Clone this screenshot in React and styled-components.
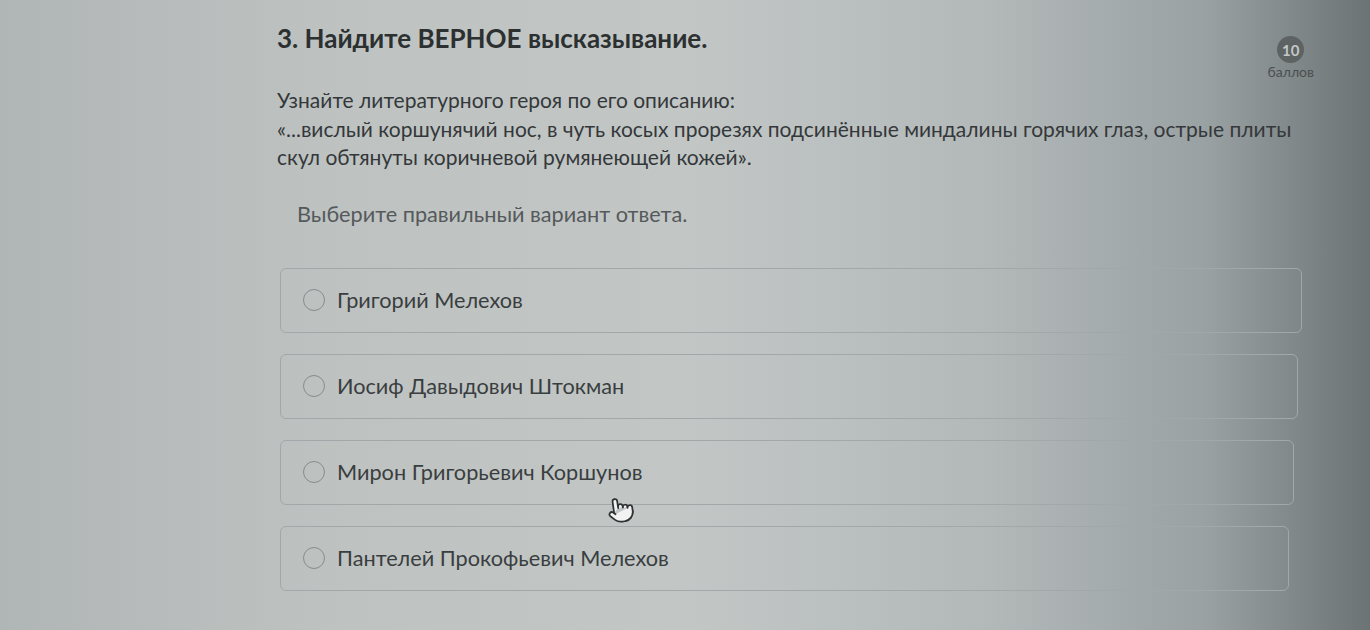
import React from "react";
import styled, { createGlobalStyle } from "styled-components";
import { Pointer } from "lucide-react";

const Global = createGlobalStyle`
  html, body { margin: 0; padding: 0; }
  body {
    width: 1370px;
    height: 630px;
    overflow: hidden;
    font-family: Lato, "Open Sans", "Noto Sans", sans-serif;
    background: linear-gradient(90deg, #b0b5b5 0%, #bec3c2 25%, #c2c7c6 50%, #b3b9b9 72%, #9aa1a3 88%, #6c7375 100%);
  }
`;

const Page = styled.div`
  position: relative;
  width: 1370px;
  height: 630px;
`;

const Question = styled.div`
  margin-left: 277px;
  width: 1035px;
  padding-top: 20px;
`;

const Header = styled.div`
  display: flex;
  justify-content: space-between;
  align-items: flex-start;
`;

const Title = styled.h2`
  margin: 0;
  font-size: 26px;
  line-height: 36px;
  font-weight: 700;
  color: #2c3031;
`;

const Score = styled.div`
  display: flex;
  flex-direction: column;
  align-items: center;
  margin-top: 16px;
  margin-right: -2px;
`;

const ScoreBadge = styled.div`
  width: 27px;
  height: 27px;
  border-radius: 50%;
  background: #5d6263;
  color: #c3c7c7;
  font-size: 15px;
  font-weight: 700;
  display: flex;
  align-items: center;
  justify-content: center;
`;

const ScoreLabel = styled.div`
  font-size: 14px;
  color: #4a4e4f;
`;

const Text = styled.div`
  margin-top: 6px;
  width: 1030px;
  font-size: 21px;
  line-height: 28.5px;
  color: #34383a;
`;

const Hint = styled.div`
  margin-top: 28px;
  margin-left: 20px;
  font-size: 21.7px;
  line-height: 28px;
  color: #55595b;
`;

const Options = styled.div`
  margin-top: 40px;
  margin-left: 3px;
  width: 1022px;
  display: flex;
  flex-direction: column;
  gap: 21px;
`;

const Option = styled.div`
  height: 63px;
  border: 1px solid #a2a8a9;
  border-radius: 6px;
  display: flex;
  align-items: center;
  padding-left: 22px;
  gap: 12px;
  margin-right: ${(p) => p.$shrink}px;
`;

const Radio = styled.span`
  width: 22px;
  height: 22px;
  border: 1.5px solid #868b8c;
  border-radius: 50%;
  box-sizing: border-box;
  flex: none;
`;

const Label = styled.span`
  font-size: 21.7px;
  color: #3a3e40;
`;

const Cursor = styled.div`
  position: absolute;
  left: 607px;
  top: 496px;
  color: #2f3334;
  transform: rotate(-8deg);
`;

const options = [
  ["Григорий Мелехов", 0],
  ["Иосиф Давыдович Штокман", 4],
  ["Мирон Григорьевич Коршунов", 8],
  ["Пантелей Прокофьевич Мелехов", 13],
];

export default function App() {
  return (
    <Page>
      <Global />
      <Question>
        <Header>
          <Title>3. Найдите ВЕРНОЕ высказывание.</Title>
          <Score>
            <ScoreBadge>10</ScoreBadge>
            <ScoreLabel>баллов</ScoreLabel>
          </Score>
        </Header>
        <Text>
          Узнайте литературного героя по его описанию:
          <br />
          «...вислый коршунячий нос, в чуть косых прорезях подсинённые миндалины горячих глаз, острые плиты скул обтянуты коричневой румянеющей кожей».
        </Text>
        <Hint>Выберите правильный вариант ответа.</Hint>
        <Options>
          {options.map(([t, s]) => (
            <Option key={t} $shrink={s}>
              <Radio />
              <Label>{t}</Label>
            </Option>
          ))}
        </Options>
      </Question>
      <Cursor>
        <Pointer size={28} strokeWidth={1.5} fill="#f2f2f2" />
      </Cursor>
    </Page>
  );
}
